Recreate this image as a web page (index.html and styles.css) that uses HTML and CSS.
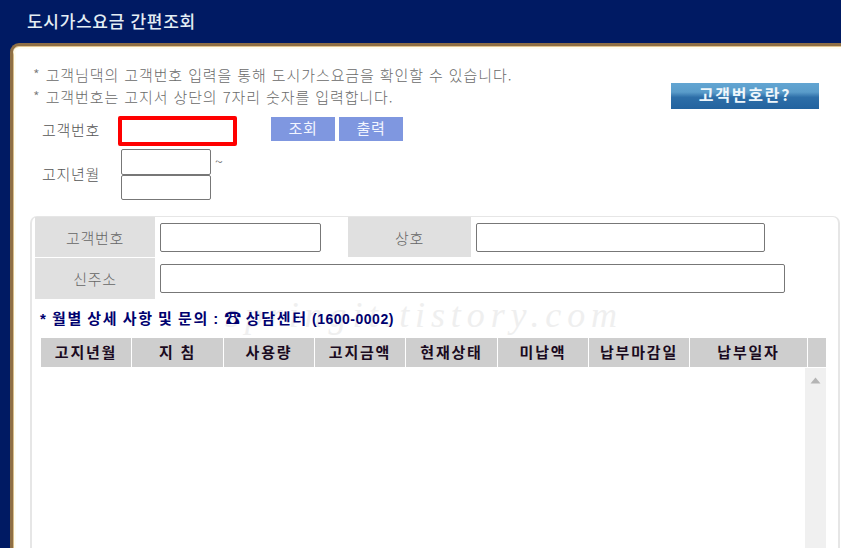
FILE: index.html
```html
<!DOCTYPE html>
<html lang="ko">
<head>
<meta charset="utf-8">
<title>도시가스요금 간편조회</title>
<link rel="stylesheet" href="styles.css">
</head>
<body>
<div class="page">
  <header class="top"><h1 class="title">도시가스요금 간편조회</h1></header>
  <main class="panel">
    <div class="intro">
      <div class="notes">
        <p class="note"><span class="star">*</span> 고객님댁의 고객번호 입력을 통해 도시가스요금을 확인할 수 있습니다.</p>
        <p class="note"><span class="star">*</span> 고객번호는 고지서 상단의 7자리 숫자를 입력합니다.</p>
      </div>
      <button class="help" type="button">고객번호란?</button>
    </div>
    <div class="query">
      <div class="row-a">
        <span class="q-label">고객번호</span>
        <input class="q-focus" type="text">
        <div class="q-buttons">
          <button class="q-btn" type="button">조회</button>
          <button class="q-btn" type="button">출력</button>
        </div>
      </div>
      <div class="row-b">
        <span class="q-label">고지년월</span>
        <div class="dates">
          <input class="q-date" type="text">
          <input class="q-date" type="text">
        </div>
        <span class="tilde">~</span>
      </div>
    </div>
    <section class="box">
      <span class="mark">springit.tistory.com</span>
      <div class="info">
        <div class="cell-label">고객번호</div>
        <div class="cell"><input class="f-a" type="text"></div>
        <div class="cell-label">상호</div>
        <div class="cell"><input class="f-b" type="text"></div>
        <div class="cell-label">신주소</div>
        <div class="cell cell-wide"><input class="f-c" type="text"></div>
      </div>
      <p class="contact">* 월별 상세 사항 및 문의 : <span class="phone">☎</span> 상담센터 <span class="num">(1600-0002)</span></p>
      <div class="thead">
        <div class="th">고지년월</div>
        <div class="th">지 침</div>
        <div class="th">사용량</div>
        <div class="th">고지금액</div>
        <div class="th">현재상태</div>
        <div class="th">미납액</div>
        <div class="th">납부마감일</div>
        <div class="th">납부일자</div>
        <div class="th"></div>
      </div>
      <div class="tbody">
        <div class="scroll"><svg class="arrow" width="11" height="7" viewBox="0 0 11 7"><path d="M5.5 0.5 L10.5 6.5 H0.5 Z" fill="#b4b4b4"/></svg></div>
      </div>
    </section>
  </main>
</div>
</body>
</html>
```
FILE: styles.css
```css
* { box-sizing: border-box; }
html, body { margin: 0; padding: 0; }
body { background: #001a63; font-family: "Noto Sans CJK KR", "Liberation Sans", sans-serif; }
.page { width: 841px; height: 548px; overflow: hidden; display: flex; flex-direction: column; background: #001a63; }
.top { height: 43px; flex: none; padding: 9px 0 0 27px; background: #001a63; }
.title { margin: 0; font-size: 17px; line-height: 24px; font-weight: 500; color: #e4eef4; letter-spacing: 0.7px; }
.panel { flex: 1; margin-left: 10px; padding: 17px 1px 0 17px; background: #fff; border-top: 3px solid #8f6f45; border-left: 3px solid #8f6f45; border-top-left-radius: 9px; box-shadow: inset 0 1px 0 #e0c48f, inset 0 3px 0 #fffdf2, inset 1px 0 0 #d8bd8a, inset 3px 0 0 #fffdf2; }
.intro { display: flex; margin-left: 3px; }
.notes { flex: 1; padding-top: 1px; }
.note { margin: 0; font-size: 15px; line-height: 22px; font-weight: 300; color: #6a6a6a; letter-spacing: 0.9px; white-space: nowrap; }
.star { color: #777; }
.help { width: 148px; height: 26px; margin: 20px 21px 0 0; padding: 0 0 3px; border: 0; font: 700 16px/23px "Noto Sans CJK KR", sans-serif; color: #eef6fb; letter-spacing: 1.8px; background: linear-gradient(#62a5d2 0, #5a9cca 35%, #2d6ea8 55%, #23639f 100%); }
.query { margin-top: 7px; padding-left: 12px; }
.row-a { display: flex; align-items: flex-start; height: 33px; }
.q-label { width: 76px; font-size: 15px; line-height: 28px; font-weight: 300; color: #555; letter-spacing: 0.7px; }
.q-focus { width: 119px; height: 30px; border: 4px solid #f00; border-radius: 2px; background: #fff; outline: 0; }
.q-buttons { display: flex; gap: 4px; margin: 1px 0 0 34px; }
.q-btn { width: 64px; height: 24px; padding: 0 0 2px; border: 0; background: #7f97e0; color: #f2f5ff; font: 400 15px/22px "Noto Sans CJK KR", sans-serif; letter-spacing: 0.7px; }
.row-b { display: flex; align-items: center; }
.row-b .q-label { width: 79px; padding-bottom: 2px; }
.dates { display: flex; flex-direction: column; }
.q-date { width: 90px; height: 26px; border: 1px solid #777; border-radius: 2px; background: #fff; outline: 0; margin: 0; padding: 0; }
.q-date + .q-date { height: 25px; }
.tilde { align-self: flex-start; margin: 2px 0 0 4px; font-size: 14px; line-height: 20px; color: #777; }
.box { position: relative; height: 340px; margin-top: 16px; padding-left: 3px; border: 2px solid #e6e6e6; border-top-width: 1px; border-bottom: 0; border-radius: 7px 7px 0 0; }
.mark { position: absolute; left: 193px; top: 73px; font: italic 36px/50px "Liberation Serif", serif; letter-spacing: 5.9px; color: #efefef; white-space: nowrap; }
.info { position: relative; display: grid; grid-template-columns: 120px 193px 123px 1fr; grid-template-rows: 40px 41px; row-gap: 1px; }
.cell-label { display: flex; align-items: center; justify-content: center; background: #e0e0e0; font-size: 15px; font-weight: 300; color: #666; letter-spacing: 0.7px; }
.cell { padding: 6px 0 0 5px; }
.cell-wide { grid-column: 2 / 5; }
.cell input { display: block; height: 29px; margin: 0; padding: 0; border: 1px solid #777; border-radius: 2px; background: #fff; outline: 0; }
.f-a { width: 161px; }
.f-b { width: 289px; }
.f-c { width: 625px; }
.contact { position: relative; margin: 10px 0 0 5px; font-family: "Liberation Sans", "Noto Sans CJK KR", sans-serif; font-size: 15px; line-height: 20px; font-weight: 700; color: #00006e; letter-spacing: 1.7px; word-spacing: -1.5px; white-space: nowrap; }
.phone { font-size: 17px; line-height: 20px; letter-spacing: 0; }
.num { font-size: 14px; letter-spacing: 0.5px; }
.thead { position: relative; display: grid; grid-template-columns: 90px 91px 90px 90px 91px 90px 100px 117px 18px; column-gap: 1px; width: 785px; margin: 9px 0 0 6px; }
.th { height: 29px; background: #cecece; font-size: 15px; line-height: 28px; font-weight: 700; color: #1a0a20; text-align: center; letter-spacing: 1.8px; }
.tbody { position: relative; display: flex; justify-content: flex-end; width: 785px; height: 181px; margin: 1px 0 0 6px; }
.scroll { width: 21px; background: #f0f0f0; padding: 9px 0 0 5px; }
.arrow { display: block; }
```
